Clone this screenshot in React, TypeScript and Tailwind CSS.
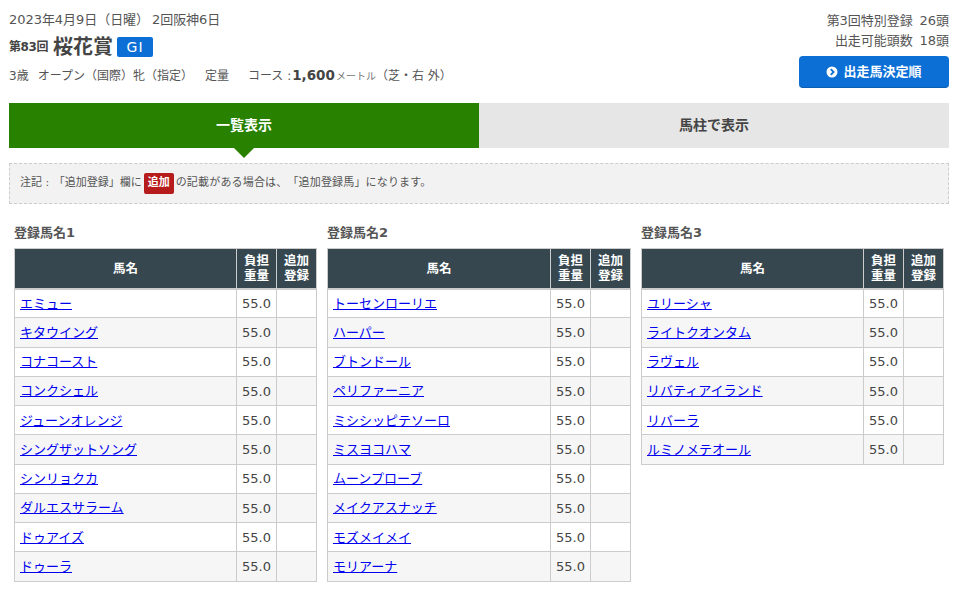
const F = '"DejaVu Sans","Noto Sans CJK JP",sans-serif';

const columns: { title: string; names: string[] }[] = [
  { title: "登録馬名1", names: ["エミュー", "キタウイング", "コナコースト", "コンクシェル", "ジューンオレンジ", "シングザットソング", "シンリョクカ", "ダルエスサラーム", "ドゥアイズ", "ドゥーラ"] },
  { title: "登録馬名2", names: ["トーセンローリエ", "ハーパー", "ブトンドール", "ペリファーニア", "ミシシッピテソーロ", "ミスヨコハマ", "ムーンプローブ", "メイクアスナッチ", "モズメイメイ", "モリアーナ"] },
  { title: "登録馬名3", names: ["ユリーシャ", "ライトクオンタム", "ラヴェル", "リバティアイランド", "リバーラ", "ルミノメテオール"] },
];

function HorseTable({ title, names, cls }: { title: string; names: string[]; cls: string }) {
  return (
    <div className={cls}>
      <h3 className="text-[13px] leading-[18px] font-bold text-[#555] mt-[2px] mb-[6px]">{title}</h3>
      <table className="w-full table-fixed border-collapse">
        <thead>
          <tr className="bg-[#37474f] text-white font-bold text-[12.5px] leading-[15px]">
            <th className="border border-[#ccc] border-b-2 h-[40px] p-0">馬名</th>
            <th className="border border-[#ccc] border-b-2 w-[40px] p-0">負担<br />重量</th>
            <th className="border border-[#ccc] border-b-2 w-[40px] p-0">追加<br />登録</th>
          </tr>
        </thead>
        <tbody>
          {names.map((n, i) => (
            <tr key={n} className={i % 2 ? "bg-[#f6f6f6]" : "bg-white"}>
              <td className="border border-[#ccc] h-[29.25px] px-[5px] pt-px pb-0 text-[13px] leading-[18px]">
                <a href="#" className="text-[#0000ee] underline">{n}</a>
              </td>
              <td className="border border-[#ccc] pt-px pb-0 px-0 text-center text-[13px] text-[#444]">55.0</td>
              <td className="border border-[#ccc] p-0"></td>
            </tr>
          ))}
        </tbody>
      </table>
    </div>
  );
}

export default function App() {
  return (
    <div className="w-[954px] h-[603px] overflow-hidden bg-white text-[#444] pl-[9px] pr-[5px] pt-[11px] [text-spacing-trim:space-all]" style={{ fontFamily: F }}>
      <header className="flex justify-between h-[92px]">
        <div>
          <p className="text-[13px] leading-[18px] text-[#555] tracking-[-0.05px]">2023年4月9日（日曜）<span className="ml-[3px]">2回阪神6日</span></p>
          <div className="flex items-center mt-[7px] h-[22px]">
            <span className="text-[12px] font-bold tracking-[-0.4px]">第83回</span>
            <span className="text-[20px] font-bold ml-[5px]">桜花賞</span>
            <span className="ml-[4px] w-[36px] h-[20px] bg-[#0b6fd6] rounded-[2px] text-white text-[14px] tracking-[1px] flex items-center justify-center">GI</span>
          </div>
          <p className="flex items-baseline mt-[7px] text-[12px] leading-[20px] text-[#555]">
            <span>3歳</span>
            <span className="ml-[9px]">オープン（国際）牝（指定）</span>
            <span className="ml-[12px]">定量</span>
            <span className="ml-[19px]">コース :</span>
            <span className="ml-[1px] font-bold text-[13.5px] text-[#444]">1,600</span>
            <span className="text-[10px] text-[#777] ml-px">メートル</span>
            <span className="text-[12px]">（芝・右 外）</span>
          </p>
        </div>
        <div className="flex flex-col items-end">
          <p className="text-[13px] leading-[20px] text-[#555] text-right tracking-[-0.05px]">第3回特別登録<span className="ml-[7px]">26頭</span><br />出走可能頭数<span className="ml-[7px]">18頭</span></p>
          <button className="mt-[5px] w-[150px] h-[32px] bg-[#0b6fd6] rounded-[4px] border-b border-[#0a5fb5] text-white font-bold text-[13px] flex items-center justify-center gap-[5px]">
            <svg width="12" height="12" viewBox="0 0 12 12">
              <circle cx="6" cy="6" r="5.5" fill="#fff" />
              <path d="M4.8 3.2 7.6 6 4.8 8.8" fill="none" stroke="#0b6fd6" strokeWidth="1.8" />
            </svg>
            出走馬決定順
          </button>
        </div>
      </header>

      <nav className="flex h-[45px] text-[14px] font-bold">
        <div className="relative flex-1 bg-[#288200] text-white flex items-center justify-center">
          一覧表示
          <span className="absolute left-1/2 -translate-x-1/2 top-full w-0 h-0 border-x-[10px] border-x-transparent border-t-[10px] border-t-[#288200]"></span>
        </div>
        <div className="flex-1 bg-[#e6e6e6] text-[#444] flex items-center justify-center">馬柱で表示</div>
      </nav>

      <div className="mt-[15px] h-[41px] border border-dashed border-[#ccc] bg-[#f2f2f2] flex items-center pl-[10px] text-[11px] text-[#555]">
        <span>注記 : <span className="ml-[1px]">「追加登録」欄に</span></span>
        <span className="mx-[2px] w-[30px] h-[21px] bg-[#b71c1c] rounded-[2px] text-white font-bold flex items-center justify-center">追加</span>
        <span className="tracking-[0.17px]">の記載がある場合は、「追加登録馬」になります。</span>
      </div>

      <div className="flex mt-[18px]">
        {columns.map((c, i) => (
          <HorseTable key={c.title} title={c.title} names={c.names} cls={["ml-[5px] w-[303px]", "ml-[10px] w-[304px]", "ml-[10px] w-[303px]"][i]} />
        ))}
      </div>
    </div>
  );
}
